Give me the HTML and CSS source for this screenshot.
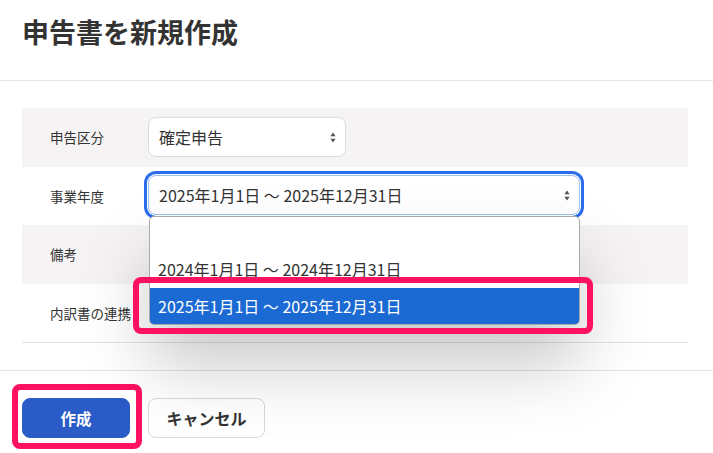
FILE: index.html
```html
<!DOCTYPE html>
<html lang="ja">
<head>
  <meta charset="UTF-8" />
  <meta name="viewport" content="width=device-width, initial-scale=1.0" />
  <title>申告書を新規作成</title>
  <link rel="stylesheet" href="styles.css">
</head>
<body>
  <div class="modal">
    <header class="modalHead">
      <h1>申告書を新規作成</h1>
    </header>

    <div class="modalBody">
      <div class="formTable">
        <div class="formRow shaded">
          <div class="formLabel">申告区分</div>
          <div class="formField">
            <div class="selectBox short">
              <span>確定申告</span>
              <svg class="arrows" width="6" height="11" viewBox="0 0 6 11"><path d="M3 0.5 L5.6 4.2 H0.4 Z M3 10.5 L5.6 6.8 H0.4 Z" fill="#555"/></svg>
            </div>
          </div>
        </div>

        <div class="formRow">
          <div class="formLabel">事業年度</div>
          <div class="formField">
            <div class="selectBox long focused">
              <span>2025年1月1日 ～ 2025年12月31日</span>
              <svg class="arrows" width="6" height="11" viewBox="0 0 6 11"><path d="M3 0.5 L5.6 4.2 H0.4 Z M3 10.5 L5.6 6.8 H0.4 Z" fill="#555"/></svg>

              <!-- 開いた状態のドロップダウン -->
              <ul class="optionList">
                <li class="option empty"></li>
                <li class="option">2024年1月1日 ～ 2024年12月31日</li>
                <li class="option selected marked">2025年1月1日 ～ 2025年12月31日</li>
              </ul>
            </div>
          </div>
        </div>

        <div class="formRow shaded">
          <div class="formLabel">備考</div>
          <div class="formField"></div>
        </div>

        <div class="formRow">
          <div class="formLabel">内訳書の連携</div>
          <div class="formField"></div>
        </div>
      </div>
    </div>

    <footer class="modalFoot">
      <span class="btnWrap marked">
        <button class="btn primary">作成</button>
      </span>
      <button class="btn">キャンセル</button>
    </footer>
  </div>
</body>
</html>
```

FILE: styles.css
```css
* {
  margin: 0;
  padding: 0;
  box-sizing: border-box;
  font-family: "Noto Sans CJK JP", "Liberation Sans", sans-serif;
}

body {
  background-color: #fff;
  color: #333;
}

.modal {
  min-height: 100vh;
}

/* header */
.modalHead {
  height: 81px;
  padding: 13px 22px 0;
  border-bottom: 1px solid #e6e6e6;
}

.modalHead h1 {
  font-size: 27px;
  line-height: 38px;
  font-weight: 700;
  color: #333;
}

/* body */
.modalBody {
  padding: 27px 25px 27px 22px;
}

.formTable {
  border-bottom: 1px solid #e3e3e3;
}

.formRow {
  display: flex;
  align-items: center;
  height: 58.5px;
}

.formRow.shaded {
  background-color: #f5f3f4;
}

.formLabel {
  width: 126px;
  padding-left: 28px;
  font-size: 13.5px;
  color: #333;
}

.formField {
  flex: 1;
}

/* select */
.selectBox {
  position: relative;
  display: flex;
  align-items: center;
  justify-content: space-between;
  height: 40px;
  padding: 0 9px 0 10px;
  background-color: #fff;
  border: 1px solid #dcdcdc;
  border-radius: 8px;
  font-size: 16px;
  color: #333;
}

.selectBox.short {
  width: 198px;
}

.selectBox.long {
  width: 432px;
  margin-top: -1px;
}

.selectBox.focused {
  border-color: #9ac3f2;
  box-shadow: 0 0 0 1px #fff, 0 0 0 4px #2c6cef;
}

.arrows {
  display: block;
}

/* dropdown */
.optionList {
  position: absolute;
  top: 40px;
  left: 0;
  width: 431px;
  list-style: none;
  background-color: #fff;
  border: 1px solid #a9a9a9;
  border-radius: 5px;
  box-shadow: 0 40px 70px rgba(0, 0, 0, 0.22);
  z-index: 10;
}

.option {
  height: 37px;
  padding-left: 8px;
  display: flex;
  align-items: center;
  font-size: 16px;
  color: #333;
}

.option.empty {
  height: 33px;
}

.option.selected {
  height: 36px;
  margin-top: 1px;
  background-color: #1b69d2;
  color: #fff;
  border-radius: 0 0 4px 4px;
}

/* footer */
.modalFoot {
  display: flex;
  align-items: flex-start;
  gap: 18px;
  padding: 27px 22px 16px;
  border-top: 1px solid #e3e3e3;
}

.btnWrap {
  display: block;
}

.btn {
  display: block;
  height: 40px;
  padding: 0 16px;
  width: 117px;
  background-color: #fff;
  border: 1px solid #d9d9d9;
  border-radius: 8px;
  font-size: 16px;
  font-weight: 700;
  color: #333;
}

.btn.primary {
  width: 108px;
  background-color: #2a5bc6;
  border-color: #2a5bc6;
  color: #fff;
  font-size: 15.5px;
}

/* 注釈の赤枠 */
.marked {
  position: relative;
}

.marked::after {
  content: "";
  position: absolute;
  border: 6px solid #ff1162;
  border-radius: 8px;
  pointer-events: none;
}

.btnWrap.marked::after {
  top: -14px;
  bottom: -11px;
  left: -10px;
  right: -12px;
}

.option.marked::after {
  top: -11px;
  bottom: -10px;
  left: -17px;
  right: -14px;
}
```
